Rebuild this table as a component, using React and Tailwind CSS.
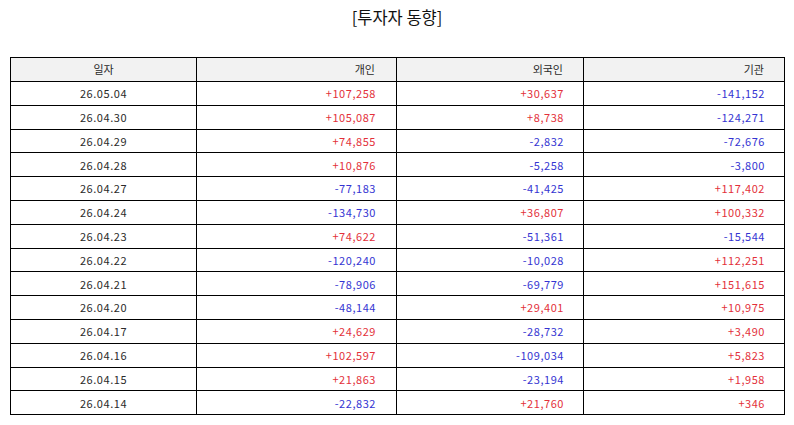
const rows = [
  ['26.05.04', '+107,258', '+30,637', '-141,152'],
  ['26.04.30', '+105,087', '+8,738', '-124,271'],
  ['26.04.29', '+74,855', '-2,832', '-72,676'],
  ['26.04.28', '+10,876', '-5,258', '-3,800'],
  ['26.04.27', '-77,183', '-41,425', '+117,402'],
  ['26.04.24', '-134,730', '+36,807', '+100,332'],
  ['26.04.23', '+74,622', '-51,361', '-15,544'],
  ['26.04.22', '-120,240', '-10,028', '+112,251'],
  ['26.04.21', '-78,906', '-69,779', '+151,615'],
  ['26.04.20', '-48,144', '+29,401', '+10,975'],
  ['26.04.17', '+24,629', '-28,732', '+3,490'],
  ['26.04.16', '+102,597', '-109,034', '+5,823'],
  ['26.04.15', '+21,863', '-23,194', '+1,958'],
  ['26.04.14', '-22,832', '+21,760', '+346'],
];

const tone = (v) => (v.startsWith('-') ? 'text-[#3434d2]' : 'text-[#e3303a]');

export default function App() {
  return (
    <div className="w-[794px] h-[425px] bg-white font-['Noto_Sans_CJK_KR',sans-serif] text-[#2a2a2a]">
      <h1 className="pt-[5px] h-[57px] text-center text-[16.5px] leading-[24px] text-[#111]">[투자자 동향]</h1>
      <div className="px-[10px]">
        <table className="w-[774px] table-fixed border-collapse text-[11px] tracking-[0.55px]">
          <colgroup>
            <col className="w-[186px]" />
            <col className="w-[200px]" />
            <col className="w-[187px]" />
            <col className="w-[201px]" />
          </colgroup>
          <thead>
            <tr className="h-[24px] bg-[#f2f2f2] tracking-normal">
              <th className="border border-black font-normal text-center">일자</th>
              <th className="border border-black font-normal text-right pr-[21px]">개인</th>
              <th className="border border-black font-normal text-right pr-[20px]">외국인</th>
              <th className="border border-black font-normal text-right pr-[20px]">기관</th>
            </tr>
          </thead>
          <tbody>
            {rows.map(([d, a, b, c]) => (
              <tr key={d} className="h-[23.8px]">
                <td className="border border-black text-center p-0">{d}</td>
                <td className={`border border-black text-right pr-[20px] p-0 ${tone(a)}`}>{a}</td>
                <td className={`border border-black text-right pr-[19px] p-0 ${tone(b)}`}>{b}</td>
                <td className={`border border-black text-right pr-[19px] p-0 ${tone(c)}`}>{c}</td>
              </tr>
            ))}
          </tbody>
        </table>
      </div>
    </div>
  );
}
